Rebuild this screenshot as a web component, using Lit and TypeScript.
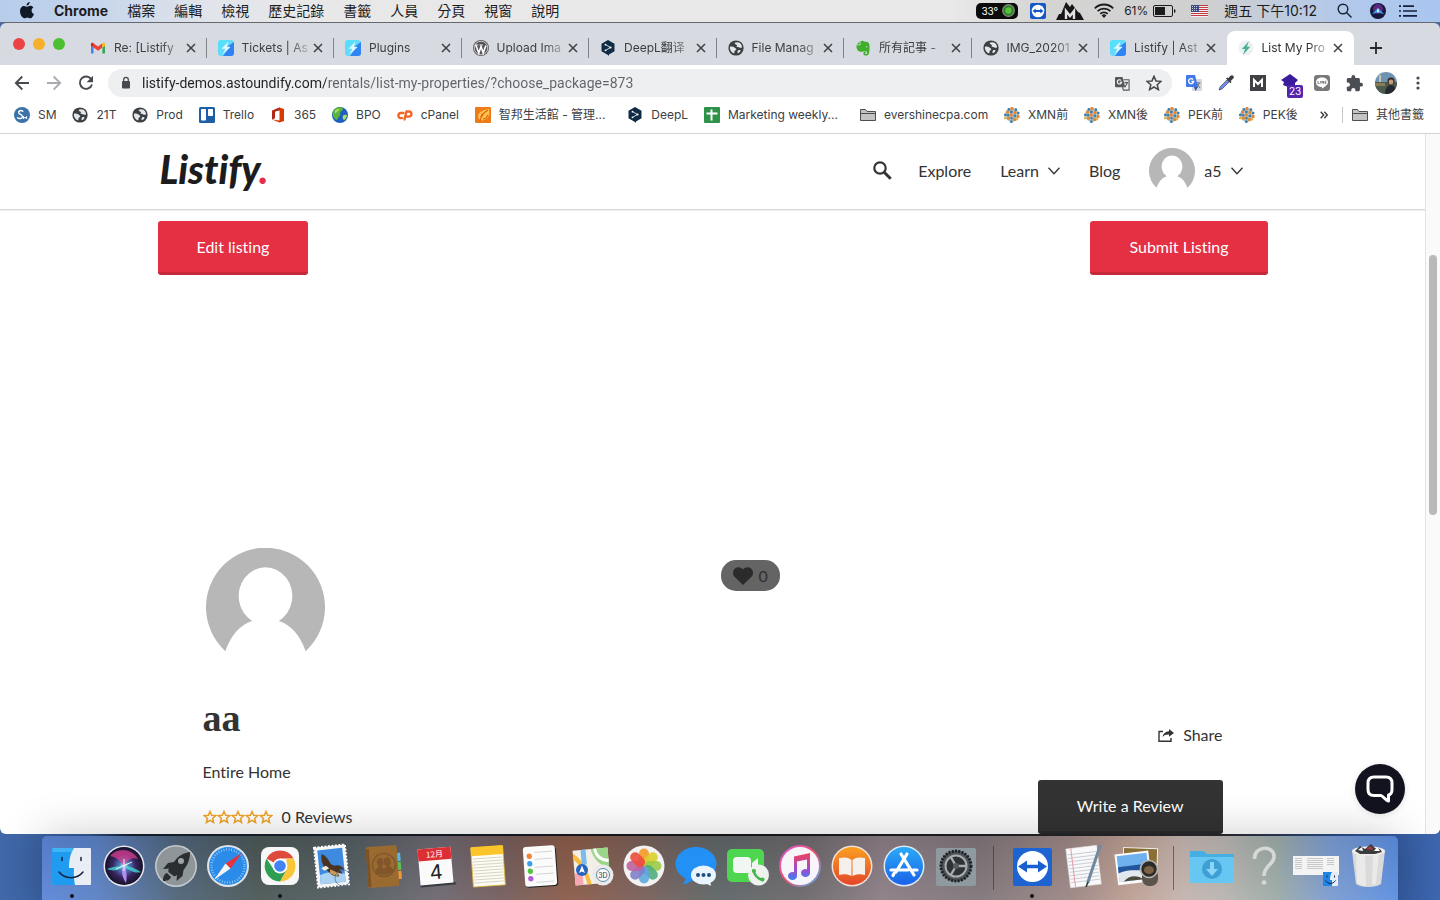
import { LitElement, html, svg, css, TemplateResult } from "lit";
import { customElement } from "lit/decorators.js";
import { classMap } from "lit/directives/class-map.js";

const icon = (size: number, view: string, body: unknown) =>
  html`<svg class="icon" width=${size} height=${size} viewBox=${view} aria-hidden="true">${body}</svg>`;
const wide = (w: number, h: number, body: unknown) =>
  html`<svg class="icon" width=${w} height=${h} viewBox="0 0 ${w} ${h}" aria-hidden="true">${body}</svg>`;

const base = css`
  * { box-sizing: border-box; }
  .icon { display: block; flex: none; }
  button { font: inherit; color: inherit; background: none; border: 0; padding: 0; margin: 0; }
  a { color: inherit; text-decoration: none; }
`;

/* ---------- 16px site and extension icons ---------- */

const globe = () => icon(16, "1.5 1.5 21 21", svg`<circle cx="12" cy="12" r="10" fill="#3c4043"/>
  <path fill="#e4e6ea" d="M4 10.5c2-.8 4.5-.3 6 .8 1.2.9 2.500 1.300 2.300 2.600-.2 1.100-1.800 1-2.200 2.200-.3 1.100.2 2.200-.6 3.200C6 18 3.500 14.500 4 10.500z"/>
  <path fill="#e4e6ea" d="M10 5.500c1.500-1.500 5-1.500 6.500-.4 1.800 1.200 3.300 3.200 3.500 5.900-1 .8-2.500.9-3.600.3-1-.6-2.200-.4-3.200-.9-1-.6-.4-1.700.5-2.100-1-.8-3-.9-3.700-2.800z"/>
  <path fill="#e4e6ea" d="M14.500 15.500c1-1 2.500-.8 3.500-.3-.6 1.600-1.800 3-3.500 3.800-.8-1.200-.8-2.500 0-3.500z"/>`);

const gmail = () => icon(16, "0 0 16 16", svg`<path fill="#4285f4" d="M1 13.500h2.600V7.500L1 5.500z"/><path fill="#34a853" d="M12.400 13.500H15v-8l-2.600 2z"/>
  <path fill="#ea4335" d="M3.600 7.500V3.300L8 6.600l4.400-3.300v4.200L8 10.800z"/><path fill="#c5221f" d="M1 4.200v1.500l2.600 1.900V3.300C2.500 2.300 1 2.900 1 4.200z"/><path fill="#fbbc04" d="M15 4.200v1.500l-2.600 1.900V3.300C13.500 2.300 15 2.900 15 4.200z"/>`);

const astoundify = () => icon(16, "0 0 16 16", svg`<defs><linearGradient id="ast" x2="1" y2="1"><stop offset="0" stop-color="#4be3fb"/><stop offset="1" stop-color="#7fd0fa"/></linearGradient></defs><rect width="16" height="16" rx="3" fill="url(#ast)"/><path fill="#2f83f2" d="M16 2v11a3 3 0 0 1-3 3H5l7-9.500H9.500z"/>
  <path fill="#dff8ff" d="M10.500 1.500 3.500 8.700h4L4.500 14.500l8-7.400H8.800z"/>`);

const wordpress = () => icon(16, "0 0 16 16", svg`<circle cx="8" cy="8" r="8" fill="#555"/><circle cx="8" cy="8" r="6.800" fill="none" stroke="#fff" stroke-width=".7"/>
  <path fill="none" stroke="#fff" stroke-width="1.600" d="m2.800 5 3 8 2.200-6.500L10.200 13l2.700-7.500"/><path stroke="#fff" stroke-width=".8" d="M2 5h3.500M6.500 5h3.500"/>`);

const deepl = () => icon(16, "0 0 16 16", svg`<path fill="#0f2b46" d="M8 0 1.500 3.700v7.500L8 15l1 1v-1.500l5.500-3.300V3.700z"/><path stroke="#fff" stroke-width=".8" fill="none" d="m5.500 4.600 5 2.900-5 2.900"/><g fill="#fff"><circle cx="5.500" cy="4.700" r=".9"/><circle cx="10.500" cy="7.500" r="1.100"/><circle cx="5.500" cy="10.300" r=".9"/></g>`);

const evernote = () => icon(16, "0 0 16 16", svg`<path fill="#3fae2a" d="M5.500 1.200c1-.9 3-.7 3.700.3 1.600.2 4 .5 4.600 1.500 1.100 2.300.9 6.800.2 10-.4 1.800-1.300 2.600-3 2.600-1.600 0-2.600-.8-2.600-2.200 0-1.300 1-2 2.300-1.900v1.300c-1 0-1 1.300.2 1.300 1.100 0 1.300-1 1.200-2.200-.7-.9-2.300-.2-3.300-1-.3 1-2.600 1-4.200.6C2.400 11 1.200 8 1.500 5.200h3.300c.6 0 .7-.3.7-.8z"/><path fill="#3fae2a" d="M4.600 1.500v2.900H1.700z"/><path fill="#dee1e6" d="M10.800 6.600c.8-.5 1.500-.2 1.700.8-.6-.2-1.100-.3-1.700-.1z"/>`);

const bolt = () => icon(16, "0 0 16 16", svg`<circle cx="8" cy="8" r="7.500" fill="#eef1f1"/><path fill="#4fae97" d="M11 1 3.800 9H7L5 15l7.300-8.300H8.900z"/>`);

const smLogo = () => icon(16, "0 0 16 16", svg`<circle cx="8" cy="8" r="8" fill="#3b72a9"/><path fill="none" stroke="#fff" stroke-width="1.400" stroke-linecap="round" d="M8.800 4.200C7 2.600 4 4 4.800 6c.6 1.500 3.600 1.600 3.700 3.500.1 2-3.200 2.800-5 1.200"/><path fill="none" stroke="#fff" d="M9.500 12V9.500l1.500 1.800L12.600 9.500V12"/>`);

const trello = () => icon(16, "0 0 16 16", svg`<rect width="16" height="16" rx="1.500" fill="#1d5fa5"/><rect x="2" y="2" width="5" height="11.500" rx=".8" fill="#fff"/><rect x="9" y="2" width="5" height="7" rx=".8" fill="#fff"/>`);

const office = () => icon(16, "0 0 16 16", svg`<path fill="#d83b01" d="M2 3.800 9.500.5 14 2v12l-4.500 1.500L2 12.400l7.500 1V3.200L5 4.400v6.700l-3 1.300z"/><path fill="#a4262c" d="M2 12.400l7.500 1V3.200L5 4.400v6.700z" opacity="0"/><path fill="#b0281c" d="M2 3.800 9.500.5v2.700L5 4.400v6.700l-3 1.300z"/>`);

const earth = () => icon(16, "0 0 16 16", svg`<circle cx="8" cy="8" r="8" fill="#1f5fc0"/><path fill="#59b53c" d="M2 3C5-.5 10 0 11 1.500c.5 1.500-1.500 2-2.500 3.300C7.500 6 9 7.500 7.600 9 6 10.300 6 12.500 4.500 13 2 11.500 0 8 .5 5.500z"/><path fill="#a9e05c" d="M3.500 3c1.500-1.200 3-1 4-.5-.8 1.500-3 1.500-3.500 4-1.500-.5-1.500-2.500-.5-3.500zM11 8.500c1.300-1 3-.8 4-.3-.2 2-1.500 4-3 5-1-1.200-2-3-1-4.700z"/>`);

const cpanel = () => icon(16, "0 0 16 16", svg`<g fill="none" stroke="#f26522" stroke-width="2.300" stroke-linecap="round"><path d="M6.500 6H4a2.600 2.600 0 0 0 0 5.200h1"/><path d="m7.500 12.500 2-8h2.300a2.600 2.600 0 0 1 0 5.200H10"/></g>`);

const leaf = () => icon(16, "0 0 16 16", svg`<rect width="16" height="16" rx="1" fill="#ee7b1b"/><path fill="#ffc04d" d="M14 2c1 6-1 11-7 11.500C3 13 2 9 4 6.500 6 4 10 2.500 14 2z"/><path fill="none" stroke="#d9600d" stroke-width="1.100" d="M5 14c1-5 3-8 8-11M5.500 10c1.500-1 2-2.500 1.500-3.500M8 12c2 0 4-1.500 4.500-4"/>`);

const sheet = () => icon(16, "0 0 16 16", svg`<rect width="16" height="16" rx="1" fill="#2e9248"/><path stroke="#fff" stroke-width="2" d="M2.500 6.500h11M7.500 2.500v11"/>`);

const folder = () => icon(16, "0 0 16 16", svg`<path fill="#c4c4c4" stroke="#4a4d51" d="M.5 13.500v-11h5l1.500 2h8.500v9z"/><path stroke="#4a4d51" d="M.5 6.500h15"/>`);

const mosaic = () => icon(16, "0 0 16 16", svg`<circle cx="8" cy="8" r="7" fill="#bcc8c4"/><g fill="#e5862f"><rect x="6.500" y="0" width="3" height="3" rx="1"/><rect x="2" y="3.500" width="3" height="3" rx="1"/><rect x="9.500" y="4" width="3" height="3" rx="1"/><rect x="5.800" y="6.500" width="3" height="3" rx="1"/><rect x="12.600" y="8" width="3" height="3" rx="1"/><rect x="3" y="9.800" width="3" height="3" rx="1"/><rect x="9" y="11" width="3" height="3" rx="1"/></g>
  <g fill="#3c7fae"><rect x="3.500" y="1" width="2.700" height="2.700" rx="1"/><rect x="10.500" y="1.300" width="2.700" height="2.700" rx="1"/><rect x="6" y="3.500" width="2.700" height="2.700" rx="1"/><rect x="0" y="6.500" width="2.700" height="2.700" rx="1"/><rect x="2.900" y="7" width="2.500" height="2.500" rx="1"/><rect x="9.500" y="7.500" width="2.700" height="2.700" rx="1"/><rect x="13" y="4.800" width="2.500" height="2.500" rx="1"/><rect x="6.300" y="10" width="2.500" height="2.500" rx="1"/><rect x="6" y="13.200" width="2.700" height="2.700" rx="1"/></g>
  <g fill="#dfb63a"><rect x="0" y="9.700" width="2.500" height="2.500" rx="1"/><rect x="12" y="11.300" width="2.300" height="2.300" rx="1"/></g>`);

const closeX = () => icon(10, "0 0 10 10", svg`<path stroke="#3c4043" stroke-width="1.500" d="m1 1 8 8M9 1 1 9"/>`);

/* ---------- macOS menu bar ---------- */

@customElement("menu-bar")
class MenuBar extends LitElement {
  static styles = [base, css`
    :host { display: block; flex: none; }
    .bar { display: flex; align-items: center; height: 23px; padding: 0 23px 1px 20px; font: 14px/22px Inter, "Noto Sans CJK TC", sans-serif; color: #1c1c1e;
      background: linear-gradient(90deg, #b7cdeb 0, #c0d2ec 5%, #e0e4ea 14%, #e9e8e8 22%, #eae9e9 66%, #d5d6d4 72%, #cfcfcf 84%, #b3c9ea 93%, #a9c6f0 100%);
      border-bottom: 1px solid #66686f; }
    .menus { display: flex; align-items: center; gap: 19px; flex: 1; }
    .app { font-weight: 700; padding: 0 0 0 1px; }
    .status { display: flex; align-items: center; gap: 10px; }
    .pill { display: flex; align-items: center; gap: 4px; height: 16px; padding: 0 3px 0 5px; margin-right: 2px; border-radius: 5px; background: #0b0b0b; color: #fff; font-size: 10px; }
    .battery { display: flex; align-items: center; gap: 5px; font-size: 12px; }
    .clock { display: flex; align-items: center; gap: 16px; padding: 0 10px 0 5px; }
    .tail { display: flex; align-items: center; gap: 13px; }
    .siri { margin-left: 5px; }
  `];
  render() {
    return html`<header class="bar">
      <nav class="menus">
        <button aria-label="Apple">${wide(14, 17, svg`<path fill="#111827" d="M9.700 0c.1 1.800-1.500 3.600-3.200 3.500C6.300 1.800 8 .1 9.700 0zM7.200 4.700c.7 0 1.700-.9 3.200-.9 1.200 0 2.300.6 3 1.600-2.700 1.600-2.200 5.400.6 6.500-.6 1.800-2.100 4.300-3.600 4.300-1.200 0-1.600-.8-3-.8s-1.900.8-3 .8C2.400 16.200 0 12.500 0 9.200c0-3.300 2-5.300 4.100-5.300 1.300 0 2.300.8 3.100.8z"/>`)}</button>
        <button class="app">Chrome</button>
        ${["檔案", "編輯", "檢視", "歷史記錄", "書籤", "人員", "分頁", "視窗", "說明"].map((m) => html`<button>${m}</button>`)}
      </nav>
      <div class="status">
        <span class="pill">33°${icon(13, "0 0 13 13", svg`<circle cx="6.500" cy="6.500" r="5.800" fill="#2f7d25" stroke="#8b8b8b" stroke-width="1.200"/><circle cx="6.500" cy="6.500" r="3.200" fill="#55c03e"/>`)}</span>
        ${icon(16, "0 0 16 16", svg`<rect width="16" height="16" rx="2" fill="#1458c8"/><circle cx="8" cy="8" r="6.300" fill="#fff"/><path fill="#1458c8" d="m2.500 8 3.200-2.600v1.700h4.600V5.400L13.500 8l-3.200 2.600V8.900H5.700v1.700z"/>`)}
        ${wide(28, 19, svg`<path fill="#161616" d="m0 19 3-6h2l5-12 4 5 2-3 6 8 2 1 4 7z"/><path stroke="#e2e2e2" stroke-width="2.400" fill="none" d="M10 18v-8l4 5 4-5v8"/>`)}
        ${wide(20, 15, svg`<g fill="none" stroke="#1c1c1e" stroke-width="1.800"><path d="M.8 5.300a13 13 0 0 1 18.400 0"/><path d="M3.600 8.200a9 9 0 0 1 12.800 0"/><path d="M6.300 10.900a5.200 5.200 0 0 1 7.400 0"/></g><path fill="#1c1c1e" d="m10 15-2.300-2.600a3.200 3.200 0 0 1 4.600 0z"/>`)}
        <span class="battery">61%${wide(23, 12, svg`<rect x=".5" y=".5" width="19" height="11" rx="1.500" fill="none" stroke="#1c1c1e"/><rect x="2" y="2" width="10" height="8" fill="#1c1c1e"/><path fill="#1c1c1e" d="M21 4c2 .5 2 3.500 0 4z"/>`)}</span>
        <span class="clock">${wide(17, 12, svg`<rect width="17" height="12" fill="#f4eeee"/><path stroke="#c23b44" d="M0 .5h17M0 2.500h17M0 4.500h17M0 6.500h17M0 8.500h17M0 10.500h17"/><rect width="8" height="7" fill="#3c4a86"/><path stroke="#c8cce0" stroke-dasharray="1 1" d="M1 1.500h6M1 3.500h6M1 5.500h6"/>`)}<time>週五 下午10:12</time></span>
        <span class="tail">
          ${icon(15, "0 0 15 15", svg`<g fill="none" stroke="#1c2330" stroke-width="1.400"><circle cx="6" cy="6" r="4.800"/><path d="m9.500 9.500 5 5"/></g>`)}
          <span class="siri">${icon(16, "0 0 16 16", svg`<circle cx="8" cy="8" r="8" fill="#15173b"/><circle cx="8" cy="6" r="5" fill="#7a2f9c" opacity=".7"/><path fill="#3aa6f0" d="m2 11 6-6 6 6-6-1.500z"/><path fill="#fff" d="m7 8 1-3 1 3-1 2z"/>`)}</span>
          ${wide(18, 12, svg`<path stroke="#14213c" stroke-width="1.700" d="M4 1.200h11M4 6h14M4 10.800h14M0 1.200h2M0 6h2M0 10.800h2"/>`)}
        </span>
      </div>
    </header>`;
  }
}

/* ---------- Chrome tab strip ---------- */

const TABS: { title: string; fav: () => TemplateResult; active?: boolean }[] = [
  { title: "Re: [Listify", fav: gmail },
  { title: "Tickets | As", fav: astoundify },
  { title: "Plugins", fav: astoundify },
  { title: "Upload Ima", fav: wordpress },
  { title: "DeepL翻译", fav: deepl },
  { title: "File Manag", fav: globe },
  { title: "所有記事 -", fav: evernote },
  { title: "IMG_20201", fav: globe },
  { title: "Listify | Ast", fav: astoundify },
  { title: "List My Pro", fav: bolt, active: true },
];

@customElement("tab-strip")
class TabStrip extends LitElement {
  static styles = [base, css`
    :host { display: block; flex: none; }
    .strip { display: flex; height: 42px; padding-top: 8px; background: #d7dae1; font: 12px/16px Inter, "Noto Sans CJK TC", sans-serif; color: #3c4043; }
    .lights { flex: none; width: 79px; display: flex; gap: 8px; padding: 7px 0 0 13px; }
    .light { width: 12px; height: 12px; border-radius: 50%; }
    .red { background: #ed4245; } .amber { background: #f6b02c; } .green { background: #4cbf32; }
    .tabs { flex: 1; min-width: 0; display: flex; }
    .tab { position: relative; flex: 1 1 0; min-width: 0; display: flex; align-items: center; padding: 0 10px 0 11px; }
    .tab::after { content: ""; position: absolute; right: 0; top: 7px; height: 20px; width: 1px; background: #80838a; }
    .before::after, .active::after { display: none; }
    .active { background: #fff; border-radius: 8px 8px 0 0; color: #303337; }
    .link { flex: 1; min-width: 0; display: flex; align-items: center; gap: 8px; }
    .title { flex: 1; min-width: 0; white-space: nowrap; mask-image: linear-gradient(90deg, #000 70%, rgba(0, 0, 0, .2) 100%); }
    .close { margin-left: 3px; padding: 1px; }
    .plus { flex: none; width: 86px; padding: 0 0 0 16px; display: flex; align-items: center; }
  `];
  render() {
    return html`<div class="strip">
      <div class="lights"><span class="light red"></span><span class="light amber"></span><span class="light green"></span></div>
      <nav class="tabs">${TABS.map((t, i) => html`<div class=${classMap({ tab: true, active: !!t.active, before: i === TABS.length - 2 })}>
        <a class="link" href="#">${t.fav()}<span class="title">${t.title}</span></a>
        <button class="close" aria-label="Close tab">${closeX()}</button></div>`)}</nav>
      <button class="plus" aria-label="New tab">${icon(12, "0 0 12 12", svg`<path stroke="#26282b" stroke-width="1.800" d="M6 0v12M0 6h12"/>`)}</button>
    </div>`;
  }
}

/* ---------- Chrome toolbar ---------- */

@customElement("tool-bar")
class ToolBar extends LitElement {
  static styles = [base, css`
    :host { display: block; flex: none; }
    .bar { display: flex; align-items: center; height: 36px; padding: 0 6px; background: #fff; }
    .btn { width: 32px; height: 28px; display: grid; place-items: center; flex: none; }
    .omni { flex: 1; min-width: 0; display: flex; align-items: center; height: 28px; margin: 0 6px; padding: 0 2px 0 12px; border-radius: 14px; background: #eeeff1; }
    .url { flex: 1; min-width: 0; margin-left: 10px; padding: 0; border: 0; outline: 0; font: 14px/20px Roboto, sans-serif; color: transparent;
      background: linear-gradient(90deg, #202124 184px, #5f6368 184px); -webkit-background-clip: text; background-clip: text; }
    .badged { position: relative; }
    .badge { position: absolute; left: 13px; top: 16px; height: 13px; padding: 0 2px; border-radius: 2px; background: #5524ad; color: #fff; font: 10px/13px Inter, sans-serif; }
  `];
  render() {
    return html`<div class="bar">
      <button class="btn" aria-label="Back">${icon(16, "0 0 16 16", svg`<path fill="none" stroke="#46494d" stroke-width="1.800" d="M15 8H2M8.300 1.500 1.800 8l6.500 6.500"/>`)}</button>
      <button class="btn" aria-label="Forward">${icon(16, "0 0 16 16", svg`<path fill="none" stroke="#a9abae" stroke-width="1.800" d="M1 8h13M7.700 1.500 14.200 8l-6.500 6.500"/>`)}</button>
      <button class="btn" aria-label="Reload">${icon(16, "0 0 16 16", svg`<path fill="none" stroke="#46494d" stroke-width="1.900" d="M13.300 4.300A6.200 6.200 0 1 0 14 9.500"/><path fill="#46494d" d="M15 .8v6.400H8.600z"/>`)}</button>
      <form class="omni">
        ${wide(12, 14, svg`<rect x="2" y="5" width="8" height="7.500" rx="1" fill="#46494d"/><path fill="none" stroke="#46494d" stroke-width="1.300" d="M3.700 5V3.700a2.300 2.300 0 0 1 4.600 0V5"/>`)}
        <input class="url" aria-label="Address" value="listify-demos.astoundify.com/rentals/list-my-properties/?choose_package=873">
        <button class="btn" type="button" aria-label="Translate">${icon(15, "0 0 16 16", svg`<path fill="#55585c" d="M1 1h7l3 11H1a1 1 0 0 1-1-1V2a1 1 0 0 1 1-1z"/><path fill="none" stroke="#55585c" stroke-width="1.200" d="M9 4h6v11H9l-1-3M10 7h4M12 6v1M10.500 12 13.500 7"/><path fill="none" stroke="#fff" stroke-width="1.200" d="M6.500 4.800A2.300 2.300 0 1 0 7 6.700H5"/>`)}</button>
        <button class="btn" type="button" aria-label="Bookmark">${icon(16, "2 2 20 20", svg`<path fill="none" stroke="#46494d" stroke-width="1.900" d="m12 3.500 2.500 5.900 6.400.5-4.900 4.200 1.500 6.200-5.500-3.300-5.500 3.300L8 14.100 3.100 9.900l6.400-.5z"/>`)}</button>
      </form>
      <button class="btn" aria-label="Google Translate">${icon(16, "0 0 16 16", svg`<rect x="6" y="4" width="10" height="12" rx="1" fill="#d5d8dc"/><path stroke="#6b7580" fill="none" d="M9.500 8h5M12 7v1M10.500 13l3-5M11 9l3 4"/><path fill="#4179e8" d="M1 0h8l3 12H1a1 1 0 0 1-1-1V1a1 1 0 0 1 1-1z"/><path fill="#2a55bd" d="M8 12h4l-2.500 4z"/><path fill="none" stroke="#fff" stroke-width="1.400" d="M7 4.500A2.500 2.500 0 1 0 7.600 6.500H5.400"/>`)}</button>
      <button class="btn" aria-label="Color picker">${icon(16, "0 0 16 16", svg`<path fill="#6f8df0" stroke="#4d5260" stroke-width=".8" d="m1 15 1-3 7-7 2 2-7 7z"/><path fill="#3b3b45" d="m8 3.500 1.200-1 1 .8L12.500.8a1.800 1.800 0 0 1 2.700 2.700L12.700 6l.8 1-1 1.200z"/>`)}</button>
      <button class="btn" aria-label="Mega">${icon(16, "0 0 16 16", svg`<rect width="16" height="16" fill="#3f4144"/><path fill="none" stroke="#fff" stroke-width="2" d="M4 12V5l4 4 4-4v7"/>`)}</button>
      <button class="btn badged" aria-label="Tag assistant">${icon(18, "0 0 18 18", svg`<path fill="#3b1c9c" d="M9 0 0 6l3 2-1 3 5 2h7V9l3-3z"/>`)}<span class="badge">23</span></button>
      <button class="btn" aria-label="LINE">${icon(16, "0 0 16 16", svg`<rect width="16" height="16" rx="3" fill="#77797b"/><path fill="#fff" d="M8 2.500c3.400 0 6 2 6 4.700S10 12 8 13.700V12c-3.400 0-6-2.100-6-4.800s2.600-4.700 6-4.700z"/><path stroke="#77797b" stroke-width=".9" fill="none" d="M4 6v2.500h1.500M6.700 6v2.500M8 8.500V6l1.500 2.500V6M12.300 6.200H11v2.200h1.300M11 7.300h1.200"/>`)}</button>
      <button class="btn" aria-label="Extensions">${icon(17, "1 1 22 22", svg`<path fill="#4b4e53" d="M20.500 11H19V7c0-1.100-.9-2-2-2h-4V3.500a2.500 2.500 0 0 0-5 0V5H4c-1.100 0-2 .9-2 2v3.800h1.500a2.700 2.700 0 0 1 0 5.400H2V20c0 1.100.9 2 2 2h3.800v-1.500a2.700 2.700 0 0 1 5.400 0V22H17c1.100 0 2-.9 2-2v-4h1.500a2.500 2.500 0 0 0 0-5z"/>`)}</button>
      <button class="btn" aria-label="Profile">${icon(22, "0 0 22 22", svg`<clipPath id="p"><circle cx="11" cy="11" r="11"/></clipPath><g clip-path="url(#p)"><rect width="22" height="22" fill="#6d94b4"/><path fill="#c9c3ac" d="M4 3h2v7H4z"/><path fill="#4d5b4d" d="M0 10h22v12H0z"/><path fill="#8a7a55" d="M0 11h10v3H0z"/><circle cx="16" cy="9" r="3.600" fill="#3a2a22"/><circle cx="16" cy="10" r="2.400" fill="#c99a7c"/><path fill="#252a30" d="M10 22c0-6 3-9 6-9s5 3 5 9z"/></g>`)}</button>
      <button class="btn" aria-label="Menu">${wide(4, 14, svg`<g fill="#46494d"><circle cx="2" cy="2" r="1.600"/><circle cx="2" cy="7" r="1.600"/><circle cx="2" cy="12" r="1.600"/></g>`)}</button>
    </div>`;
  }
}

/* ---------- Bookmarks ---------- */

const BOOKMARKS: [string, () => TemplateResult][] = [
  ["SM", smLogo], ["21T", globe], ["Prod", globe], ["Trello", trello], ["365", office], ["BPO", earth], ["cPanel", cpanel],
  ["智邦生活館 - 管理...", leaf], ["DeepL", deepl], ["Marketing weekly...", sheet], ["evershinecpa.com", folder],
  ["XMN前", mosaic], ["XMN後", mosaic], ["PEK前", mosaic], ["PEK後", mosaic],
];

@customElement("bookmark-bar")
class BookmarkBar extends LitElement {
  static styles = [base, css`
    :host { display: block; flex: none; }
    .bar { display: flex; align-items: center; height: 33px; padding: 0 16px 5px 14px; background: #fff; border-bottom: 1px solid #d3d4d6; font: 12px/16px Inter, "Noto Sans CJK TC", sans-serif; color: #3c4043; white-space: nowrap; }
    .list { flex: 1; min-width: 0; display: flex; justify-content: space-between; }
    .mark { display: flex; align-items: center; gap: 8px; }
    .long { padding-right: 6px; }
    .more { margin: 0 14px 0 22px; }
    .other { padding-left: 9px; border-left: 1px solid #c6c8cb; }
  `];
  render() {
    return html`<div class="bar">
      <nav class="list">${BOOKMARKS.map(([t, i]) => html`<a class=${classMap({ mark: true, long: t.endsWith("...") })} href="#">${i()}<span>${t}</span></a>`)}</nav>
      <button class="more" aria-label="More bookmarks">${wide(8, 8, svg`<path fill="none" stroke="#3c4043" stroke-width="1.400" d="m.7.700 3 3.300-3 3.300M4.300.700l3 3.300-3 3.300"/>`)}</button>
      <button class="mark other">${folder()}<span>其他書籤</span></button>
    </div>`;
  }
}

/* ---------- Listing page ---------- */

const person = (size: number) => icon(size, "0 0 120 120", svg`<path fill="#b7b7b7" fill-rule="evenodd" d="M19.500 104A60 60 0 1 1 100.500 104C95 88 86 77.500 73.500 73.500A27 29 0 1 0 46.500 73.500C34 77.500 25 88 19.500 104z"/>`);
const chevron = () => wide(12, 8, svg`<path fill="none" stroke="#333" stroke-width="1.300" d="m.5.800 5.500 6 5.500-6"/>`);

@customElement("listing-page")
class ListingPage extends LitElement {
  static styles = [base, css`
    :host { position: relative; flex: 1; min-height: 0; display: flex; background: #fff; }
    .view { position: relative; flex: 1; min-width: 0; overflow: hidden; font: 16px/24px Lato, sans-serif; font-variant-ligatures: none; color: #333; }
    .view button, .view a { font-variant-ligatures: none; }
    .head { height: 76px; border-bottom: 1px solid #d8d8d8; box-shadow: 0 1px 1px #f0f0f0; }
    .wrap { width: 1110px; max-width: 100%; margin: 0 auto; }
    .headrow { display: flex; align-items: center; height: 73px; padding: 0 25px 0 2px; }
    .logo { flex: 1; padding-bottom: 4px; font: italic 900 39px/48px Lato, sans-serif; color: #1c1c1c; }
    .dot { color: #e3304a; }
    .nav { display: flex; align-items: center; gap: 29px; }
    .drop { display: flex; align-items: center; gap: 9px; }
    .search { margin-right: -3px; }
    .actions { display: flex; justify-content: space-between; padding-top: 11px; }
    .cta { height: 54px; padding: 0 39px; border-radius: 3px; border-bottom: 3px solid #c8283c; background: #e52f43; color: #fff; }
    .listing { padding: 273px 45px 0; }
    .cover { display: grid; grid-template-columns: 1fr 1fr; gap: 16px; align-items: start; height: 120px; }
    .avatar { padding-left: 3px; }
    .like { justify-self: start; margin-top: 12px; height: 31px; padding: 0 12px; display: flex; align-items: center; gap: 6px; border-radius: 15px; background: #646464; color: #2f2f2f; }
    .info { display: flex; justify-content: space-between; margin-top: 28px; }
    .title { margin: 0; font: 700 38px/44px "Liberation Serif", serif; }
    .kind { margin: 20px 0 21px; }
    .rating { display: flex; align-items: center; gap: 9px; }
    .stars { display: flex; gap: 0; }
    .side { display: flex; flex-direction: column; align-items: flex-end; gap: 33px; padding-top: 27px; }
    .share { display: flex; align-items: center; gap: 9px; }
    .review { background: #333; border-bottom-color: #2a2a2a; }
    .chat { position: absolute; right: 20px; bottom: 20px; width: 50px; height: 50px; display: grid; place-items: center; border-radius: 50%; background: #12131f; box-shadow: 0 1px 6px rgba(0, 0, 0, .12); }
    .scroll { flex: none; width: 15px; padding: 121px 3px 0; background: #fafafa; border-left: 1px solid #e3e3e3; }
    .thumb { height: 260px; border-radius: 4px; background: #b9b9b9; }
  `];
  render() {
    const star = icon(14, "0 0 24 24", svg`<path fill="none" stroke="#f0a429" stroke-width="2.600" d="m12 2.500 2.800 6.600 7.100.6-5.400 4.700 1.600 7L12 17.700l-6.100 3.700 1.600-7L2.100 9.700l7.100-.6z"/>`);
    return html`<div class="view">
      <header class="head"><div class="wrap headrow">
        <a class="logo" href="#">Listify<span class="dot">.</span></a>
        <nav class="nav">
          <button class="search" aria-label="Search">${icon(19, "0 0 19 19", svg`<g fill="none" stroke="#333"><circle cx="7" cy="7" r="5.700" stroke-width="2.200"/><path stroke-width="3" d="m11.200 11.200 6.500 6.500"/></g>`)}</button>
          <a href="#">Explore</a><a class="drop" href="#">Learn${chevron()}</a><a href="#">Blog</a>
          <a class="drop" href="#">${person(46)}a5${chevron()}</a>
        </nav></div></header>
      <main class="wrap">
        <div class="actions"><button class="cta">Edit listing</button><button class="cta">Submit Listing</button></div>
        <section class="listing">
          <div class="cover"><div class="avatar">${person(119)}</div>
            <button class="like">${wide(20, 18, svg`<path fill="#2b2b2b" d="M10 18 1.500 9.800C-.7 7.400-.4 3.600 1.900 1.500 4.300-.6 7.800-.2 10 2.600 12.200-.2 15.700-.6 18.100 1.500c2.300 2.100 2.600 5.900.4 8.300z"/>`)}<span>0</span></button></div>
          <div class="info">
            <div><h1 class="title">aa</h1><p class="kind">Entire Home</p>
              <div class="rating"><span class="stars">${[0, 1, 2, 3, 4].map(() => star)}</span><span>0 Reviews</span></div></div>
            <div class="side"><a class="share" href="#">${wide(16, 13, svg`<path fill="none" stroke="#333" stroke-width="1.400" d="M5 2.500H1v9.800h12V9"/><path fill="#333" d="M11 0v2.200C7.500 2.400 5 4.500 4.400 8.300 6 6 8 5.400 11 5.500v2.300L16 4z"/>`)}Share</a>
              <button class="cta review">Write a Review</button></div>
          </div>
        </section>
      </main>
      <button class="chat" aria-label="Open chat">${icon(28, "0 0 28 28", svg`<path fill="none" stroke="#fff" stroke-width="3" stroke-linejoin="round" d="M8 2h12c4 0 6 2 6 6v6.500c0 3-1 5-3.500 5.500v6c-3-1-4-3.500-7.500-5.500H8c-4 0-6-2-6-6V8c0-4 2-6 6-6z"/>`)}</button>
    </div>
    <div class="scroll"><div class="thumb"></div></div>`;
  }
}

/* ---------- Dock ---------- */

const finder = svg`<rect x="2" y="4" width="39" height="37" rx="1" fill="#e9edf5"/><path fill="#1f9bf0" d="M3 4h21c-4 6-5 13-5 20h5c-.5 6 0 12 1 17H3a1 1 0 0 1-1-1V5a1 1 0 0 1 1-1z"/><path fill="#56c2fa" d="M3 4h21l-2 4H2z" opacity=".6"/><g fill="none" stroke="#14233f" stroke-width="1.500" stroke-linecap="round"><path d="M12 13.500v3M31 13.500v3M9 28c6 7.500 18 7.500 24 0"/></g>`;
const siri = svg`<defs><radialGradient id="si"><stop offset="0" stop-color="#d6f7ff"/><stop offset=".25" stop-color="#4a7fc0"/><stop offset=".6" stop-color="#3b2560"/><stop offset="1" stop-color="#14122b"/></radialGradient></defs><circle cx="22" cy="22" r="20.500" fill="#e8e8ee"/><circle cx="22" cy="22" r="19" fill="url(#si)"/><path fill="#e43f93" opacity=".7" d="M8 12C15 3 30 4 36 15c-6-2-10 0-14 7-4-6-8-9-14-10z"/><path fill="#41e0d8" opacity=".75" d="M5 25c8-3 13-3 17-3 6 0 11 2 17 6-7 2-12-2-17-6-5 4-9 6-17 3z"/><path fill="#b78cf0" d="M21 22c-2 5-1 11 3 17 1-6 1-12-2-17z"/><path stroke="#fff" stroke-width="1" opacity=".9" d="m14 25 16-7M22 15v12"/>`;
const rocket = svg`<circle cx="22" cy="22" r="21" fill="#c8ccd0"/><circle cx="22" cy="22" r="19.500" fill="#8f9699"/><path fill="#2b2e31" d="M36 8c-7 1-12 4-16 10l-6 1-5 6 6-.5c-1 2-1 3 0 4l4 3c1 1 2 1 4-.5l-.500 6 6-5 1-6C34 21 36 15 36 8zM13 29c-3 1-4 4-4 8 4 0 7-1 8-4z"/><circle cx="27" cy="17" r="3" fill="#9ea5a8"/>`;
const safari = svg`<circle cx="22" cy="22" r="21" fill="#dfe5ea"/><circle cx="22" cy="22" r="19" fill="#2a8be8"/><circle cx="22" cy="22" r="16.500" fill="none" stroke="#a8d5f8" stroke-width="2.500" stroke-dasharray=".7 1.900"/><path fill="#e8333a" d="m36 9-16.500 10.500 5 5z"/><path fill="#f2f4f6" d="m8 36 16.500-11.500-5-5z"/>`;
const chrome = svg`<rect x="3" y="3" width="38" height="38" rx="8" fill="#f7f7f7"/><path fill="#de4b3d" d="M22 22 8.600 14.500a15.500 15.500 0 0 1 27 0L22 14.500z"/><path fill="#f9c63a" d="M35.600 14.500A15.500 15.500 0 0 1 22 37.500l6.500-12V14.500z"/><path fill="#2e9e50" d="M22 37.500a15.500 15.500 0 0 1-13.400-23L16 26l12 .5z"/><circle cx="22" cy="22" r="7.400" fill="#fff"/><circle cx="22" cy="22" r="5.800" fill="#4284f3"/>`;
const mail = svg`<g transform="rotate(-6 22 22)"><rect x="6" y="2" width="31" height="40" fill="#f5f5f5" stroke="#fff" stroke-dasharray="2 1.500" stroke-width="2"/><rect x="9" y="5" width="25" height="34" fill="#3d8ade"/><path fill="#a9d2f3" d="M9 30c8-3 17-3 25 1v8H9z"/><path fill="#4a3322" d="M13 9c4 2 6 6 8 11l3 2c5-1 8 1 10 5l-5-1 3 5-5-2 1 4c-5 0-9-3-11-7-4-4-6-11-4-17z"/><path fill="#c79a5b" d="m20 25 8 5-2 3-7-4z"/><path fill="#f3efe4" d="m11 23 5-2 3 3-5 2z"/></g><circle cx="33" cy="34" r="8" fill="none" stroke="#445a78" opacity=".6"/>`;
const contacts = svg`<g transform="rotate(-4 22 22)"><path fill="#52bce6" d="M34 10h5v8h-5z"/><path fill="#5ec05a" d="M34 19h5v8h-5z"/><path fill="#f09a35" d="M34 28h5v8h-5z"/><rect x="5" y="2" width="31" height="41" rx="2" fill="#9a6a31"/><path fill="#7d5225" d="M5 4h3v38H5z"/><circle cx="22" cy="21" r="11.500" fill="none" stroke="#80562a" stroke-width="1.500"/><g fill="#80562a"><ellipse cx="18.500" cy="18" rx="3.300" ry="4.500"/><ellipse cx="25.500" cy="18" rx="3.300" ry="4.500"/><path d="M13 28c0-4 3-5 5-6l2 1 2 2 2-2 2-1c2 1 5 2 5 6-5 4-13 4-18 0z"/></g></g>`;
const calendar = svg`<g transform="rotate(-5 22 22)"><path fill="#363b42" d="M5 39h34l2 3H5z"/><rect x="5" y="4" width="33" height="36" fill="#fafafa"/><path fill="#dd2e33" d="M5 4h33v12H5z"/><text x="21.500" y="13" text-anchor="middle" font-family="Noto Sans CJK TC, sans-serif" font-size="8" fill="#fff">12月</text><text x="21.500" y="35" text-anchor="middle" font-family="Inter, sans-serif" font-size="20" fill="#222">4</text></g>`;
const notes = svg`<g transform="rotate(-4 22 22)"><rect x="6" y="3" width="32" height="39" fill="#fdfcf3" stroke="#e2b93b" stroke-width=".8"/><path fill="#fcc62b" d="M6 2h32v9H6z"/><path stroke="#c8c6b8" stroke-width=".7" d="M7 14h30M7 17h30M7 20h30M7 23h30M7 26h30M7 29h30M7 32h30M7 35h30M7 38h30"/></g>`;
const reminders = svg`<g transform="rotate(-4 22 22)"><rect x="7" y="4" width="32" height="39" rx="3" fill="#222"/><rect x="6" y="2" width="32" height="40" rx="3" fill="#fbfbfb"/><g><circle cx="12" cy="11.500" r="2.700" fill="#f28535"/><circle cx="12" cy="19" r="2.700" fill="#3f9ee8"/><circle cx="12" cy="26.500" r="2.700" fill="#52c43d"/><circle cx="12" cy="34" r="2.700" fill="#b458d8"/></g><path stroke="#ccc" stroke-width=".8" d="M17 8h18M17 15h18M17 23h18M17 30h18M17 38h18"/></g>`;
const maps = svg`<g transform="rotate(-5 22 22)"><rect x="4" y="5" width="35" height="35" fill="#f3efe6"/><path fill="#9bd588" d="M22 5h17v20c-8-2-15-9-17-20z"/><path fill="none" stroke="#fff" stroke-width="3" d="M26 5c1 8 6 12 13 13"/><path fill="#f4a8b4" d="M4 28h8v12H4z"/><path fill="#fabc3f" d="M4 14c6 6 10 14 12 26h4C18 26 12 14 4 8z"/><path fill="#78bcf0" d="M12 5h5v15h-5z"/></g><circle cx="12" cy="26" r="6" fill="#2563c0"/><path fill="#fff" d="m12 21.500 3 7.500-3-1.500L9 29z"/><circle cx="33" cy="31" r="10.500" fill="#e8eaeb"/><circle cx="33" cy="31" r="6.500" fill="#fafafa" stroke="#5b84a4"/><text x="33" y="33.500" text-anchor="middle" font-family="Inter, sans-serif" font-size="7" fill="#333">3D</text>`;
const petals = ["#f49a27", "#d9d02b", "#9ccb47", "#4fae7c", "#5fa8dc", "#8080cc", "#c0609e", "#ec4d3c"];
const photos = svg`<circle cx="22" cy="22" r="20.500" fill="#f2f2f2"/>${petals.map((c, i) => svg`<rect x="17" y="4.500" width="10" height="17" rx="5" fill=${c} opacity=".9" transform="rotate(${i * 45} 22 22)"/>`)}`;
const messages = svg`<ellipse cx="22" cy="20" rx="20.500" ry="17" fill="#2390f5"/><path fill="#2390f5" d="M12 32c0 4-2 7-4 8 5 0 9-2 11-5z"/><ellipse cx="29.500" cy="31" rx="12.500" ry="9.500" fill="#e9f4fd"/><path fill="#e9f4fd" d="m31 39 6 3-1-5z"/><g fill="#1d4f85"><circle cx="24" cy="31" r="2"/><circle cx="29.500" cy="31" r="2"/><circle cx="35" cy="31" r="2"/></g>`;
const facetime = svg`<rect x="1" y="5" width="37" height="33" rx="5" fill="#4fd650"/><rect x="7" y="13" width="18" height="16" rx="4" fill="#f2f6f2"/><path fill="#f2f6f2" d="m26 19 6-5v13l-6-4z"/><circle cx="32.500" cy="31" r="10.500" fill="#eef1ee"/><path fill="none" stroke="#43b649" stroke-width="2.500" stroke-linecap="round" d="M27.500 26.500c1 5 4 8 9 9.500"/><g fill="#43b649"><circle cx="28" cy="27" r="2"/><circle cx="36.500" cy="35.500" r="2"/></g>`;
const itunes = svg`<defs><linearGradient id="it" x1="0" y1="0" x2="1" y2="1"><stop offset="0" stop-color="#d85bdc"/><stop offset=".5" stop-color="#ef4e6b"/><stop offset="1" stop-color="#4bb4f4"/></linearGradient><linearGradient id="nt" x2="0" y2="1"><stop offset="0" stop-color="#f24356"/><stop offset=".6" stop-color="#a04ad0"/><stop offset="1" stop-color="#3a80f0"/></linearGradient></defs><circle cx="22" cy="22" r="20" fill="#f8f5fa" stroke="url(#it)" stroke-width="2"/><path fill="url(#nt)" d="M16 12.500 32 9v20a4.500 4 0 1 1-3-3.800V15.500l-10 2V32a4.500 4 0 1 1-3-3.800z"/>`;
const books = svg`<defs><linearGradient id="bk" x2="0" y2="1"><stop offset="0" stop-color="#f9a021"/><stop offset="1" stop-color="#e4452a"/></linearGradient></defs><circle cx="22" cy="22" r="20.500" fill="#f2e2da"/><circle cx="22" cy="22" r="19" fill="url(#bk)"/><path fill="#f6f0ec" d="M21.500 16c-3-3-8-3-12.500-2v17c4-1 9-1 12.500 1zM22.500 16c3-3 8-3 12.500-2v17c-4-1-9-1-12.500 1z"/>`;
const appstore = svg`<defs><linearGradient id="as" x2="0" y2="1"><stop offset="0" stop-color="#2aaaf7"/><stop offset="1" stop-color="#1b62e8"/></linearGradient></defs><circle cx="22" cy="22" r="20.500" fill="#dfe9f5"/><circle cx="22" cy="22" r="19" fill="url(#as)"/><g stroke="#fff" stroke-width="3.200" stroke-linecap="round"><path d="m19 10 13 21M25 10 14 28M9 26h17M31 26h4M11 31.500l1-2"/></g>`;
const settings = svg`<rect x="2" y="4" width="40" height="38" rx="2" fill="#8e9aa0"/><circle cx="22" cy="22" r="15.500" fill="#50555a"/><circle cx="22" cy="22" r="15" fill="none" stroke="#1f2224" stroke-width="3" stroke-dasharray="2 1.300"/><circle cx="22" cy="22" r="10.500" fill="#2f3336" stroke="#a8adb0" stroke-width="2"/><g stroke="#a8adb0" stroke-width="2.400"><path d="M22 22 16.500 12.500M22 22h11M22 22l-5.500 9.500"/></g><circle cx="22" cy="22" r="3" fill="#565b5f"/>`;
const teamviewer = svg`<rect x="3" y="4" width="39" height="38" rx="2" fill="#1d63d2"/><circle cx="22.500" cy="22.500" r="15.500" fill="#fff"/><path fill="#1a5fcf" d="m8 22.500 9-6v4.200h11v-4.200l9 6-9 6v-4.200H17v4.200z"/>`;
const textedit = svg`<g transform="rotate(-7 22 22)"><rect x="6" y="3" width="31" height="39" fill="#f9f9f9" stroke="#ddd" stroke-width=".6"/><path stroke="#b5bcc8" stroke-width=".7" d="M7 9h29M7 12.500h29M7 16h29M7 19.500h29M7 23h29M7 26.500h29M7 30h29M7 33.500h29M7 37h29"/><path stroke="#e79aa0" d="M11 3v39"/></g><path stroke="#6f8aa0" stroke-width="3" stroke-linecap="round" d="M38 2 26 38"/><path stroke="#333" stroke-width="1.500" d="m26 38-2 5"/>`;
const preview = svg`<rect x="9" y="4" width="34" height="24" fill="#8a6f35" stroke="#eee" transform="rotate(2 22 22)"/><g transform="rotate(-7 22 22)"><rect x="2" y="8" width="34" height="31" fill="#fafafa"/><rect x="4" y="10" width="30" height="26" fill="#6fb0ee"/><path fill="#21569c" d="M4 21h30v7H4z"/><path fill="#e2e8ee" d="M4 27c10-3 20 0 30 1v8H4z"/><path fill="#4d4a3c" d="M8 36c6-6 14-5 20 0z"/></g><rect x="28" y="24" width="16" height="18" rx="7" fill="#5b534c"/><circle cx="35" cy="25" r="8.500" fill="#2c2b2a" stroke="#b7b5b2" stroke-width="1.600"/><ellipse cx="35" cy="26" rx="5" ry="4" fill="#7d6145"/>`;
const downloads = svg`<path fill="#45afe4" d="M0 7h14l3 3h26a1 1 0 0 1 1 1v26H0z"/><rect x="0" y="13" width="44" height="26" rx="1" fill="#68c6f2"/><circle cx="22" cy="25" r="10" fill="#3e9fd4"/><path fill="#8ad6f8" d="M20 18h4v7h4l-6 7-6-7h4z"/>`;
const question = svg`<path fill="none" stroke="#d5d8d6" stroke-width="3.600" d="M12.500 15C12 1 33 1 32 13c-.5 8-10 8-10 19"/><circle cx="22" cy="38.500" r="2.300" fill="#d5d8d6"/>`;
const minimized = svg`<rect x="-1" y="12" width="46" height="19" fill="#f4f4f4"/><path stroke="#b4b4b4" stroke-width=".7" stroke-dasharray="7 5 16 4" d="M1 14.500h42M1 16.500h42M1 18.500h42M1 20.500h42M1 22.500h30M1 24.500h28"/><rect x="29" y="28" width="15" height="14" rx="1" fill="#e6edf8"/><path fill="#1f86e8" d="M29 28h9c-2 3-2 6-2 8h2v6h-9z"/><path fill="none" stroke="#14233f" d="M31.500 36.500c3 4 7 4 10 0M33 31.500v2M40.500 31.500v2"/>`;
const trash = svg`<path fill="#d9dad9" d="M6 7h33l-4 33c-5 4-20 4-25 0z"/><path fill="#f1f1f0" d="M10 9h9l1 33c-4 0-7-1-9-3zM27 9h6l-3 31-4 1z" opacity=".7"/><ellipse cx="22.500" cy="7" rx="16.500" ry="4.500" fill="#efefee"/><path fill="#3b3c3e" d="m9 7 5-5 5 3 6-5 4 4 5 1 2 3-7 2H14z"/><path fill="#b3373b" d="m20 5 5-3 2 4z"/><path fill="#fff" d="m12 6 4-3 1 4zM28 7l3-4 3 4z"/>`;

const DOCK: [string, unknown, boolean?][] = [
  ["Finder", finder, true], ["Siri", siri], ["Launchpad", rocket], ["Safari", safari], ["Google Chrome", chrome, true], ["Mail", mail],
  ["Contacts", contacts], ["Calendar", calendar], ["Notes", notes], ["Reminders", reminders], ["Maps", maps], ["Photos", photos],
  ["Messages", messages], ["FaceTime", facetime], ["iTunes", itunes], ["Books", books], ["App Store", appstore], ["System Preferences", settings],
  ["", null], ["TeamViewer", teamviewer, true], ["TextEdit", textedit], ["Preview", preview],
  ["", null], ["Downloads", downloads], ["Unknown", question], ["Minimized window", minimized], ["Trash", trash],
];

@customElement("mac-dock")
class MacDock extends LitElement {
  static styles = [base, css`
    :host { display: flex; justify-content: center; flex: none; position: relative; }
    .dock { display: flex; height: 64px; padding: 0 4px; border-radius: 5px 5px 0 0; box-shadow: 0 0 46px rgba(0, 0, 0, .22);
      background: linear-gradient(180deg, rgba(0, 0, 0, .08), rgba(255, 255, 255, .06)), linear-gradient(90deg, #5a85d8 0, #5a80c4 4%, #4e6378 10%, #4a5655 16%, #525c60 23%, #6b6670 29%, #735c5a 34%, #8a5a48 39%, #7c5d54 43%, #5d6466 50%, #6a6669 56%, #8a7c84 62%, #7d7478 69%, #9c8684 76%, #bb9d90 80%, #c4b3ad 84%, #b8b4b0 87%, #9caaa6 91%, #7a9bd0 95%, #5a8de0 100%); }
    .slot { display: flex; flex-direction: column; align-items: center; width: 52px; padding-top: 8px; }
    .icon { overflow: visible; }
    .run { width: 4px; height: 4px; margin-top: 6px; border-radius: 50%; background: #10131a; }
    .sep { width: 24px; padding: 10px 11px 0; }
    .line { width: 1px; height: 44px; background: rgba(40, 40, 44, .55); }
  `];
  render() {
    return html`<nav class="dock">${DOCK.map(([name, art, running]) => art
      ? html`<button class="slot" aria-label=${name}>${icon(44, "0 0 44 44", art)}${running ? html`<span class="run"></span>` : ""}</button>`
      : html`<div class="sep"><div class="line"></div></div>`)}</nav>`;
  }
}

@customElement("app-root")
class AppRoot extends LitElement {
  static styles = css`
    :host { display: flex; flex-direction: column; height: 100vh; overflow: hidden;
      background: linear-gradient(90deg, #4169ab 0, #355a98 6%, #182130 9%, #16181c 50%, #2a2a30 85%, #2c4d8b 93%, #3d67b0 100%); }
    .window { flex: 1; min-height: 0; display: flex; flex-direction: column; margin-bottom: 2px; border-radius: 6px; overflow: hidden; }
  `;
  render() {
    return html`<menu-bar></menu-bar>
      <div class="window"><tab-strip></tab-strip><tool-bar></tool-bar><bookmark-bar></bookmark-bar><listing-page></listing-page></div>
      <mac-dock></mac-dock>`;
  }
}
